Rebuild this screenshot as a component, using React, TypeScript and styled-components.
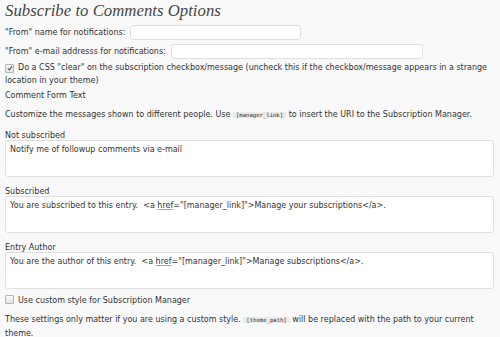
import React from "react"
import styled, { createGlobalStyle } from "styled-components"

const Global = createGlobalStyle`
  html, body {
    margin: 0;
    padding: 0;
    background: #f9f9f9;
  }
`

function Check({ checked }: { checked?: boolean }) {
  return (
    <Box>
      {checked && (
        <svg width="6" height="6" viewBox="0 0 6 6">
          <path d="M0.8 3.2 L2.4 4.8 L5.2 1.2" fill="none" stroke="#555" strokeWidth="1.1" />
        </svg>
      )}
    </Box>
  )
}

function App() {
  return (
    <Page>
      <Global />
      <Title>Subscribe to Comments Options</Title>
      <InlineRow>
        <Label>"From" name for notifications:</Label>
        <TextInput $width={171} defaultValue="" />
      </InlineRow>
      <InlineRow>
        <Label>"From" e-mail addresss for notifications:</Label>
        <TextInput $width={252} defaultValue="" />
      </InlineRow>
      <CheckRow $gap={0}>
        <Check checked />
        Do a CSS "clear" on the subscription checkbox/message (uncheck this if the checkbox/message appears in a strange location in your theme)
      </CheckRow>
      <Heading>Comment Form Text</Heading>
      <Para>
        Customize the messages shown to different people. Use <Code>[manager_link]</Code> to insert the URI to the Subscription Manager.
      </Para>
      <Field $gap={10}>
        <FieldLabel>Not subscribed</FieldLabel>
        <Area>Notify me of followup comments via e-mail</Area>
      </Field>
      <Field>
        <FieldLabel>Subscribed</FieldLabel>
        <Area>
          You are subscribed to this entry.&nbsp; &lt;a <U>href</U>="[manager_link]"&gt;Manage your subscriptions&lt;/a&gt;.
        </Area>
      </Field>
      <Field>
        <FieldLabel>Entry Author</FieldLabel>
        <Area>
          You are the author of this entry.&nbsp; &lt;a <U>href</U>="[manager_link]"&gt;Manage subscriptions&lt;/a&gt;.
        </Area>
      </Field>
      <CheckRow $gap={5}>
        <Check />
        Use custom style for Subscription Manager
      </CheckRow>
      <Para $gap={6}>
        These settings only matter if you are using a custom style. <Code>[theme_path]</Code> will be replaced with the path to your current theme.
      </Para>
    </Page>
  )
}

export default App

const Page = styled.div`
  width: 500px;
  height: 337px;
  overflow: hidden;
  box-sizing: border-box;
  padding: 0 6px 0 5px;
  background: #f9f9f9;
  color: #333;
  font-family: "DejaVu Sans", Verdana, sans-serif;
  font-size: 8px;
  line-height: 13px;
  display: flex;
  flex-direction: column;
  & > * {
    flex-shrink: 0;
  }
`
const Title = styled.h2`
  margin: 0 0 1px 0;
  font-family: "Liberation Serif", Georgia, serif;
  font-style: italic;
  font-weight: normal;
  font-size: 16.8px;
  line-height: 22px;
  color: #464646;
`
const InlineRow = styled.div`
  display: flex;
  align-items: center;
  gap: 5px;
  height: 19px;
`
const Label = styled.div`
  color: #333;
  line-height: 12px;
`
const FieldLabel = styled.div`
  color: #333;
  line-height: 8px;
`
const TextInput = styled.input<{ $width: number }>`
  width: ${(p) => p.$width}px;
  height: 15px;
  box-sizing: border-box;
  border: 1px solid #dfdfdf;
  border-radius: 3px;
  background: #fff;
  padding: 0 3px;
  font: inherit;
  outline: none;
`
const CheckRow = styled.div<{ $gap?: number }>`
  margin-top: ${(p) => p.$gap ?? 3}px;
  line-height: 13px;
`
const Box = styled.span`
  display: inline-flex;
  align-items: center;
  justify-content: center;
  box-sizing: border-box;
  width: 9px;
  height: 9px;
  margin-right: 4px;
  vertical-align: -1px;
  border: 1px solid #b4b4b4;
  border-radius: 1px;
  background: linear-gradient(#fafafa, #e4e4e4);
`
const Heading = styled.div`
  margin-top: 2px;
  line-height: 14px;
`
const Para = styled.p<{ $gap?: number }>`
  margin: ${(p) => p.$gap ?? 5}px 0 0 0;
  line-height: 14px;
`
const Code = styled.code`
  font-family: "DejaVu Sans Mono", monospace;
  font-size: 5.6px;
  line-height: 8px;
  background: #eaeaea;
  padding: 0 3px;
`
const Field = styled.div<{ $gap?: number }>`
  display: flex;
  flex-direction: column;
  margin-top: ${(p) => p.$gap ?? 11}px;
`
const Area = styled.div`
  height: 37px;
  box-sizing: border-box;
  border: 1px solid #dfdfdf;
  border-radius: 3px;
  background: #fff;
  padding: 2px 4px;
  color: #333;
`
const U = styled.span`
  text-decoration: underline;
  text-decoration-color: #c8a060;
`
